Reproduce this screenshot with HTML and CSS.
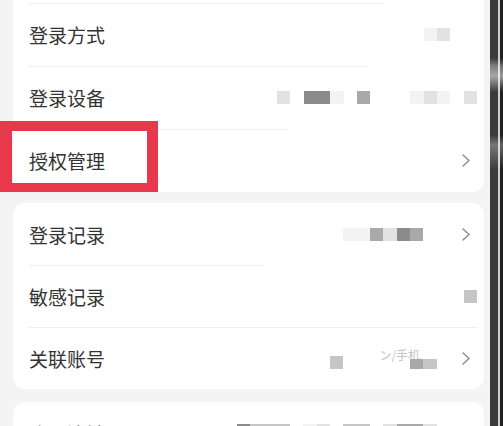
FILE: index.html
```html
<!DOCTYPE html>
<html lang="zh-CN">
<head>
<meta charset="utf-8">
<title>账号与安全</title>
<link rel="stylesheet" href="styles.css">
</head>
<body>
<div class="screen">
  <main class="list">
    <section class="card card-first">
      <div class="row sep sep-a">
        <span class="label">登录方式</span>
        <div class="mosaic">
          <i class="cell c1"></i><i class="cell c2"></i><i class="cell c0"></i><i class="cell c0"></i>
        </div>
      </div>
      <div class="row sep sep-b">
        <span class="label">登录设备</span>
        <div class="mosaic">
          <i class="cell c2"></i><i class="cell c0"></i><i class="cell c5"></i><i class="cell c5"></i><i class="cell c1"></i><i class="cell c0"></i><i class="cell c4"></i><i class="cell c0"></i><i class="cell c0"></i><i class="cell c0"></i><i class="cell c1"></i><i class="cell c2"></i><i class="cell c1"></i><i class="cell c0"></i><i class="cell c2"></i>
        </div>
      </div>
      <div class="row sep sep-c">
        <span class="label">授权管理</span>
        <span class="chev"><svg width="8" height="13" viewBox="0 0 8 13"><path d="M1 1 L7 6.5 L1 12" fill="none" stroke="#8c8c8c" stroke-width="1.4" stroke-linecap="round" stroke-linejoin="round"/></svg></span>
        <span class="highlight"></span>
      </div>
    </section>

    <section class="card card-second">
      <div class="row">
        <span class="label">登录记录</span>
        <div class="mosaic">
          <i class="cell c1"></i><i class="cell c1"></i><i class="cell c4"></i><i class="cell c2"></i><i class="cell c5"></i><i class="cell c4"></i><i class="cell c0"></i><i class="cell c0"></i>
        </div>
        <span class="chev"><svg width="8" height="13" viewBox="0 0 8 13"><path d="M1 1 L7 6.5 L1 12" fill="none" stroke="#8c8c8c" stroke-width="1.4" stroke-linecap="round" stroke-linejoin="round"/></svg></span>
      </div>
      <div class="row sep sep-d">
        <span class="label">敏感记录</span>
        <div class="mosaic">
          <i class="cell c3"></i>
        </div>
      </div>
      <div class="row sep sep-e">
        <span class="label">关联账号</span>
        <div class="mosaic mosaic-tall">
          <i class="cell c3"></i><span class="faint">ン/手机</span><i class="cell half c4"></i><i class="cell half c3"></i><i class="cell c0"></i>
        </div>
        <span class="chev"><svg width="8" height="13" viewBox="0 0 8 13"><path d="M1 1 L7 6.5 L1 12" fill="none" stroke="#8c8c8c" stroke-width="1.4" stroke-linecap="round" stroke-linejoin="round"/></svg></span>
      </div>
    </section>

    <section class="card card-third">
      <div class="row row-cut">
        <span class="label">账号注销</span>
        <div class="mosaic">
          <i class="cell c5"></i><i class="cell c3"></i><i class="cell c3"></i><i class="cell c3"></i><i class="cell c0"></i><i class="cell c1"></i><i class="cell c2"></i><i class="cell c0"></i><i class="cell c3"></i><i class="cell c3"></i><i class="cell c0"></i><i class="cell c2"></i><i class="cell c4"></i><i class="cell c4"></i><i class="cell c2"></i><i class="cell c0"></i>
        </div>
        <span class="chev"></span>
      </div>
    </section>
  </main>
  <div class="edge"></div>
</div>
</body>
</html>
```
FILE: styles.css
```css
html, body {
  margin: 0;
  padding: 0;
}

body {
  background: #f4f4f4;
  font-family: "Noto Sans CJK SC", "Noto Sans", sans-serif;
  overflow: hidden;
}

.screen {
  display: flex;
  width: 503px;
  height: 426px;
  overflow: hidden;
}

.list {
  width: 490px;
  flex-shrink: 0;
  box-sizing: border-box;
  padding: 0 6px 0 13px;
  display: flex;
  flex-direction: column;
}

.card {
  background: #ffffff;
  border-radius: 12px;
  flex-shrink: 0;
}

.card-first {
  border-radius: 0 0 12px 12px;
  padding-top: 3px;
}

.card-second {
  margin-top: 11px;
}

.card-third {
  margin-top: 13px;
  height: 80px;
}

.row {
  position: relative;
  display: flex;
  align-items: center;
  height: 62px;
  padding: 0 7px 0 16px;
}

.card-first .row {
  height: 63px;
}

.label {
  flex: 1;
  font-size: 19px;
  line-height: 1;
  color: #333333;
  white-space: nowrap;
}

.sep::before {
  content: "";
  position: absolute;
  top: 0;
  left: 16px;
  right: var(--sep-r, 7px);
  height: 1px;
  background: #eeeeee;
}

.sep-a { --sep-r: 101px; }
.sep-b { --sep-r: 116px; }
.sep-c { --sep-r: 196px; }
.sep-d { --sep-r: 219px; }
.sep-e { --sep-r: 7px; }

.mosaic {
  display: flex;
  align-items: center;
}

.mosaic-tall {
  height: 22px;
  align-items: flex-end;
}

.cell {
  display: block;
  width: 13.33px;
  height: 13px;
  flex-shrink: 0;
}

.cell.half {
  height: 10px;
}

.c0 { background: transparent; }
.c1 { background: #f3f3f3; }
.c2 { background: #e2e2e2; }
.c3 { background: #c6c6c6; }
.c4 { background: #a9a9a9; }
.c5 { background: #8b8b8b; }

.faint {
  align-self: flex-start;
  width: 66.65px;
  box-sizing: border-box;
  padding-left: 36px;
  font-size: 12px;
  line-height: 16px;
  color: #c4c4c4;
  white-space: nowrap;
}

.chev {
  width: 27px;
  height: 13px;
  display: flex;
  align-items: center;
  flex-shrink: 0;
}

.chev svg {
  display: block;
  margin-left: 12px;
}

.row-cut {
  align-items: flex-start;
  padding-top: 21px;
  box-sizing: border-box;
}

.row-cut .label {
  line-height: 1.2;
}

.row-cut .mosaic {
  margin-top: 1px;
}

.highlight {
  position: absolute;
  left: -13px;
  top: -8px;
  width: 158px;
  height: 71px;
  box-sizing: border-box;
  border-style: solid;
  border-color: #e8384b;
  border-width: 10px 11px 9px 12px;
  pointer-events: none;
}

.edge {
  width: 13px;
  flex-shrink: 0;
  background:
    linear-gradient(to bottom,
      transparent 0 58px,
      rgba(255, 255, 255, 0.35) 66px,
      rgba(255, 255, 255, 0.55) 76px,
      transparent 92px,
      transparent 135px,
      rgba(255, 255, 255, 0.3) 145px,
      transparent 170px,
      transparent 100%),
    linear-gradient(to right, #3b3b3b 0 8px, #cfcfcf 8px 10px, #202020 10px 13px);
}
```
